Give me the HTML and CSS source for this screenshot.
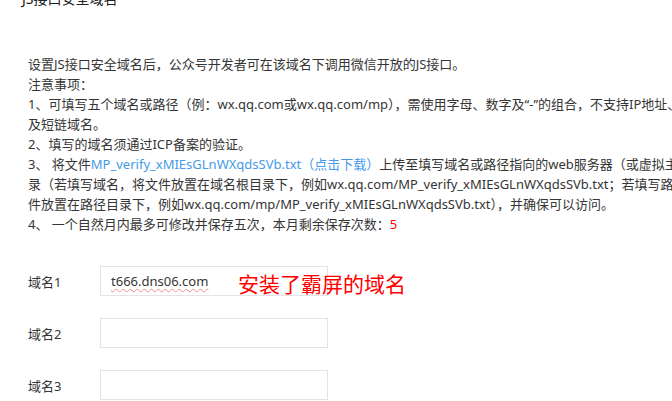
FILE: index.html
```html
<!DOCTYPE html>
<html lang="zh-CN">
<head>
  <meta charset="UTF-8" />
  <meta name="viewport" content="width=device-width, initial-scale=1.0" />
  <title>JS接口安全域名</title>
  <link rel="stylesheet" href="styles.css">
</head>
<body>
  <div class="page">
    <h2 class="title">JS接口安全域名</h2>

    <div class="desc">
      <p>设置JS接口安全域名后，公众号开发者可在该域名下调用微信开放的JS接口。</p>
      <p>注意事项：</p>
      <p>1、可填写五个域名或路径（例：wx.qq.com或wx.qq.com/mp），需使用字母、数字及“-”的组合，不支持IP地址、端口号<br>及短链域名。</p>
      <p>2、填写的域名须通过ICP备案的验证。</p>
      <p>3、 将文件<a class="link" href="#">MP_verify_xMIEsGLnWXqdsSVb.txt（点击下载）</a>上传至填写域名或路径指向的web服务器（或虚拟主机）的目<br>录（若填写域名，将文件放置在域名根目录下，例如wx.qq.com/MP_verify_xMIEsGLnWXqdsSVb.txt；若填写路径，将文<br>件放置在路径目录下，例如wx.qq.com/mp/MP_verify_xMIEsGLnWXqdsSVb.txt），并确保可以访问。</p>
      <p>4、 一个自然月内最多可修改并保存五次，本月剩余保存次数：<span class="count">5</span></p>
    </div>

    <div class="form">
      <div class="row">
        <label class="label">域名1</label>
        <div class="field"><span class="typo">t666.dns06.com</span></div>
        <span class="note">安装了霸屏的域名</span>
      </div>
      <div class="row">
        <label class="label">域名2</label>
        <div class="field"></div>
      </div>
      <div class="row">
        <label class="label">域名3</label>
        <div class="field"></div>
      </div>
    </div>
  </div>
</body>
</html>
```

FILE: styles.css
```css
body {
  margin: 0;
  padding: 0;
  font-family: "Noto Sans", "Noto Sans CJK SC", sans-serif;
  font-size: 13px;
  color: #353535;
  background: #fff;
  overflow: hidden;
}
.page {
  width: 760px;
  margin-top: -11px;
}
.title {
  margin: 0 0 0 22px;
  font-size: 14px;
  font-weight: normal;
  line-height: 20px;
  color: #222;
}
.desc {
  margin-top: 45px;
  padding-left: 28px;
}
.desc p {
  margin: 0;
  line-height: 20px;
  white-space: nowrap;
}
.link {
  color: #459ae9;
  text-decoration: none;
}
.count {
  color: #f00;
}
.form {
  margin-top: 32px;
  padding-left: 28px;
  display: flex;
  flex-direction: column;
  gap: 22px;
}
.row {
  position: relative;
  display: flex;
  align-items: center;
  height: 30px;
}
.label {
  width: 72px;
  flex-shrink: 0;
}
.field {
  box-sizing: border-box;
  width: 228px;
  height: 30px;
  padding: 0 10px;
  border: 1px solid #e4e4e6;
  line-height: 28px;
}
.typo {
  text-decoration: underline wavy #f08c8c;
  text-decoration-thickness: 1px;
  text-underline-offset: 2px;
}
.note {
  position: absolute;
  left: 210px;
  top: 6px;
  font-size: 21px;
  line-height: 24px;
  color: #f00;
  white-space: nowrap;
}
```
